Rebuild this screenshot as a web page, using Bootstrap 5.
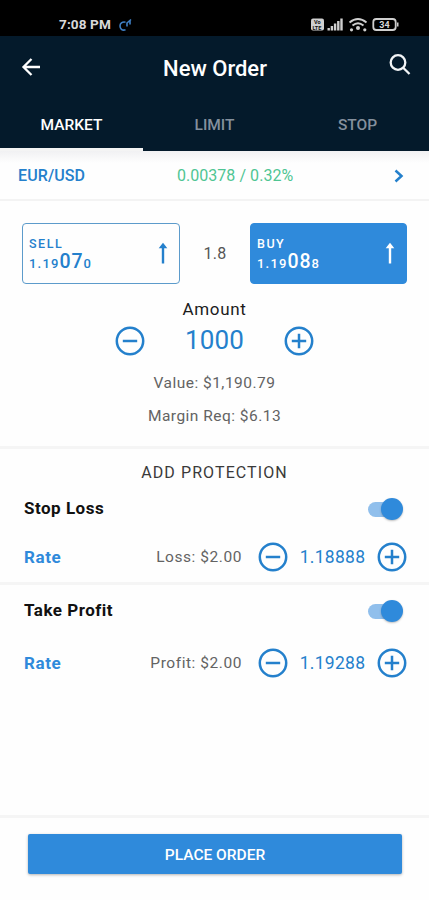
<!DOCTYPE html>
<html lang="en">
<head>
<meta charset="utf-8">
<meta name="viewport" content="width=device-width, initial-scale=1">
<title>New Order</title>
<link href="https://cdn.jsdelivr.net/npm/bootstrap@5.3.0/dist/css/bootstrap.min.css" rel="stylesheet">
<style>
:root{--blue:#2f8adb;--ink:#2480cc;--navy:#041a2b}
body{font-family:Roboto,"Liberation Sans",sans-serif;background:#fefefe;color:#1c1c1c;line-height:1}
.screen{height:900px;overflow:hidden}
svg{display:block;flex:none}
.status{height:36px;background:#000;color:#d8d8d8;padding:14px 28px 0 59px}
.clock{font-size:13.6px;font-weight:700;letter-spacing:.1px}
.topbar{height:62px;background:var(--navy);color:#fff;padding:0 17px 0 20px}
.heading{font-size:22px;font-weight:500;padding-top:4px}
.find{margin-bottom:4px}
.tabs{height:53px;background:var(--navy)}
.tabs .nav-link{height:53px;padding:0;border-radius:0;color:#84909d;font-size:15.5px;font-weight:500;border-bottom:3px solid transparent;line-height:54px}
.tabs .nav-link.active{color:#fff;background:none;border-bottom-color:#f4f4f4}
.pair{height:50px;padding:1px 24px 0 18px;color:var(--ink);border-bottom:2px solid #f3f3f3;background:linear-gradient(#f1f1f3,#fefefe 12px)}
.pair-name{font-size:16px;font-weight:500;letter-spacing:.1px}
.change{font-size:16px;color:#4fc593;letter-spacing:.05px;margin-right:8px}
.quotes{padding:22px 22px 0}
.quote{width:158px;height:61px;border-radius:4px;border:1.5px solid #5c9bcb;color:var(--ink);padding:14px 11px 0 6px;background:#fefefe}
.quote.buy{background:var(--blue);border-color:var(--blue);color:#fff;width:157px}
.side{font-size:12.5px;font-weight:500;letter-spacing:1.5px}
.price{font-size:13px;font-weight:500;letter-spacing:1.2px;height:20px;margin-top:1px}
.price b{font-size:19.5px;font-weight:500;letter-spacing:.9px}
.spread{font-size:16px;color:#555;letter-spacing:.3px;padding-top:1px}
.amount-label{font-size:17px;letter-spacing:.7px;height:17px;margin-top:17px}
.amount-row{height:46px;padding:0 115px}
.amount-value{font-size:26px;color:var(--ink);letter-spacing:.2px;margin-bottom:2px}
.notes{padding:3px 0 13px}
.notes .note{line-height:33px}
.note{font-size:15.5px;color:#636363;letter-spacing:.48px}
.rule{height:3px;background:#f5f5f5}
.caption{font-size:16px;letter-spacing:1.1px;color:#3a3a3a;height:46px;line-height:48px}
.opt-row{height:27px;padding:0 26px 0 24px}
.opt-name{font-size:17px;font-weight:700;letter-spacing:.5px;color:#111}
.rate-row{height:30px;padding:0 22px 0 24px;margin:20px 0 10px}
.rate-row .note{letter-spacing:.55px;padding-top:2px}
.profit .opt-row{margin-top:12px}
.profit .rate-row{margin-top:24px}
.rate-name{font-size:17px;font-weight:700;letter-spacing:.6px;color:var(--blue)}
.rate-value{font-size:17.5px;color:var(--ink);letter-spacing:.3px;width:89px;padding-top:2px}
.switcher{width:36px;height:24px;position:relative}
.switcher::before{content:"";position:absolute;left:1px;top:5px;width:30px;height:15px;border-radius:8px;background:#90bfec}
.switcher::after{content:"";position:absolute;right:0;top:1px;width:22px;height:22px;border-radius:50%;background:var(--blue);box-shadow:0 1px 2px rgba(0,0,0,.25)}
.foot{padding-bottom:26px}
.place{height:40px;border-radius:2px;background:var(--blue);color:#fff;font-size:15.5px;font-weight:500;border:0;box-shadow:0 1px 3px rgba(0,0,0,.3);width:374px;margin:16px 0 0 28px;padding:3px 0 0}
</style>
</head>
<body>
<svg width="0" height="0" class="position-absolute">
  <symbol id="minus" viewBox="0 0 30 30"><g fill="none" stroke="#2480cc" stroke-width="2.5"><circle cx="15" cy="15" r="13.2"/><path d="M7.8 15h14.4"/></g></symbol>
  <symbol id="plus" viewBox="0 0 30 30"><g fill="none" stroke="#2480cc" stroke-width="2.5"><circle cx="15" cy="15" r="13.2"/><path d="M7.8 15h14.4M15 7.8v14.4"/></g></symbol>
  <symbol id="up" viewBox="0 0 10 22"><path d="M5 21.500V3" fill="none" stroke="currentColor" stroke-width="2.4"/><path d="M5 .8L9.300 6.200H.7z" fill="currentColor"/></symbol>
</svg>
<main class="screen d-flex flex-column">
  <div class="status d-flex justify-content-between">
    <div class="d-flex"><span class="clock pt-1">7:08 PM</span>
      <svg class="ms-2" width="14" height="20" viewBox="0 0 14 20" fill="none" stroke="#3f7fc4" stroke-width="1.6"><path d="M6.500 8.200C3 7.500 1 9.500 1 12s2 5 5.500 3.800"/><path d="M8 12.500V9L12 5.500M11 6v4.500"/></svg>
    </div>
    <svg width="90" height="20" viewBox="0 0 90 20">
      <rect x="0" y="4.500" width="13" height="12" rx="2" fill="#d0d0d0"/>
      <text x="3" y="10" font-size="5.500" font-weight="700" fill="#111">Vo</text><text x="1.500" y="15.500" font-size="5.500" font-weight="700" fill="#111">LTE</text>
      <g fill="#cfcfcf"><path d="M16.500 14h2.400v2.500h-2.400zM19.700 12h2.400v4.500h-2.400zM22.900 9.500h2.400v7h-2.400zM26.100 7h2.400v9.500h-2.400zM29.300 4.500h2.400v12h-2.400z"/><circle cx="47" cy="14" r="2"/><circle cx="40.500" cy="15.800" r="1.600"/><circle cx="53.800" cy="15.800" r="1.600"/></g>
      <g fill="none" stroke="#cfcfcf" stroke-width="1.900"><path d="M38.500 8.500q8.500-7 17 0M41.500 11.600q5.500-4.600 11 0"/></g>
      <rect x="62.300" y="5" width="22.400" height="11" rx="3" fill="none" stroke="#cfcfcf" stroke-width="1.800"/><path d="M86 8.500h1.500v4H86z" fill="#cfcfcf"/>
      <text x="73.500" y="13.800" font-size="9" font-weight="700" fill="#d8d8d8" text-anchor="middle">34</text>
    </svg>
  </div>
  <header class="topbar d-flex justify-content-between align-items-center">
    <svg width="22" height="20" viewBox="0 0 22 20" fill="none" stroke="#fff" stroke-width="2.300"><path d="M20 10H3.500M11.500 2L3.500 10l8 8"/></svg>
    <h1 class="heading m-0">New Order</h1>
    <svg class="find" width="24" height="24" viewBox="0 0 24 24" fill="none" stroke="#f2f4f6" stroke-width="2.300"><circle cx="10" cy="9.500" r="7.300"/><path d="M15.200 14.700L21.500 21"/></svg>
  </header>
  <nav class="tabs nav nav-pills nav-fill">
    <a class="nav-link col-4 active" href="#">MARKET</a>
    <a class="nav-link col-4" href="#">LIMIT</a>
    <a class="nav-link col-4" href="#">STOP</a>
  </nav>
  <div class="pair d-flex align-items-center justify-content-between">
    <span class="pair-name">EUR/USD</span><span class="change">0.00378 / 0.32%</span>
    <svg width="12" height="14" viewBox="0 0 12 14" fill="none" stroke="#2480cc" stroke-width="2.500"><path d="M2.500 1.500L8.500 7l-6 5.500"/></svg>
  </div>
  <section class="quotes d-flex justify-content-between align-items-center">
    <div class="quote d-flex justify-content-between">
      <div><div class="side">SELL</div><div class="price">1.19<b>07</b>0</div></div>
      <svg class="mt-1" width="10" height="22"><use href="#up"/></svg>
    </div>
    <span class="spread">1.8</span>
    <div class="quote buy d-flex justify-content-between">
      <div><div class="side">BUY</div><div class="price">1.19<b>08</b>8</div></div>
      <svg class="mt-1" width="10" height="22"><use href="#up"/></svg>
    </div>
  </section>
  <section class="text-center">
    <div class="amount-label">Amount</div>
    <div class="amount-row d-flex justify-content-between align-items-center">
      <svg width="30" height="30"><use href="#minus"/></svg><span class="amount-value">1000</span><svg width="30" height="30"><use href="#plus"/></svg>
    </div>
    <div class="notes">
      <div class="note">Value: $1,190.79</div>
      <div class="note">Margin Req: $6.13</div>
    </div>
  </section>
  <div class="rule"></div>
  <section>
    <div class="caption text-center">ADD PROTECTION</div>
    <div class="opt-row d-flex justify-content-between align-items-center"><span class="opt-name">Stop Loss</span><span class="switcher" role="switch" aria-checked="true"></span></div>
    <div class="rate-row d-flex align-items-center"><span class="rate-name me-auto">Rate</span><span class="note me-3">Loss: $2.00</span><svg width="30" height="30"><use href="#minus"/></svg><span class="rate-value text-center">1.18888</span><svg width="30" height="30"><use href="#plus"/></svg></div>
  </section>
  <div class="rule"></div>
  <section class="profit">
    <div class="opt-row d-flex justify-content-between align-items-center"><span class="opt-name">Take Profit</span><span class="switcher" role="switch" aria-checked="true"></span></div>
    <div class="rate-row d-flex align-items-center"><span class="rate-name me-auto">Rate</span><span class="note me-3">Profit: $2.00</span><svg width="30" height="30"><use href="#minus"/></svg><span class="rate-value text-center">1.19288</span><svg width="30" height="30"><use href="#plus"/></svg></div>
  </section>
  <footer class="foot mt-auto"><div class="rule"></div><button class="place btn d-block">PLACE ORDER</button></footer>
</main>
<script src="https://cdn.jsdelivr.net/npm/bootstrap@5.3.0/dist/js/bootstrap.bundle.min.js"></script>
</body>
</html>
